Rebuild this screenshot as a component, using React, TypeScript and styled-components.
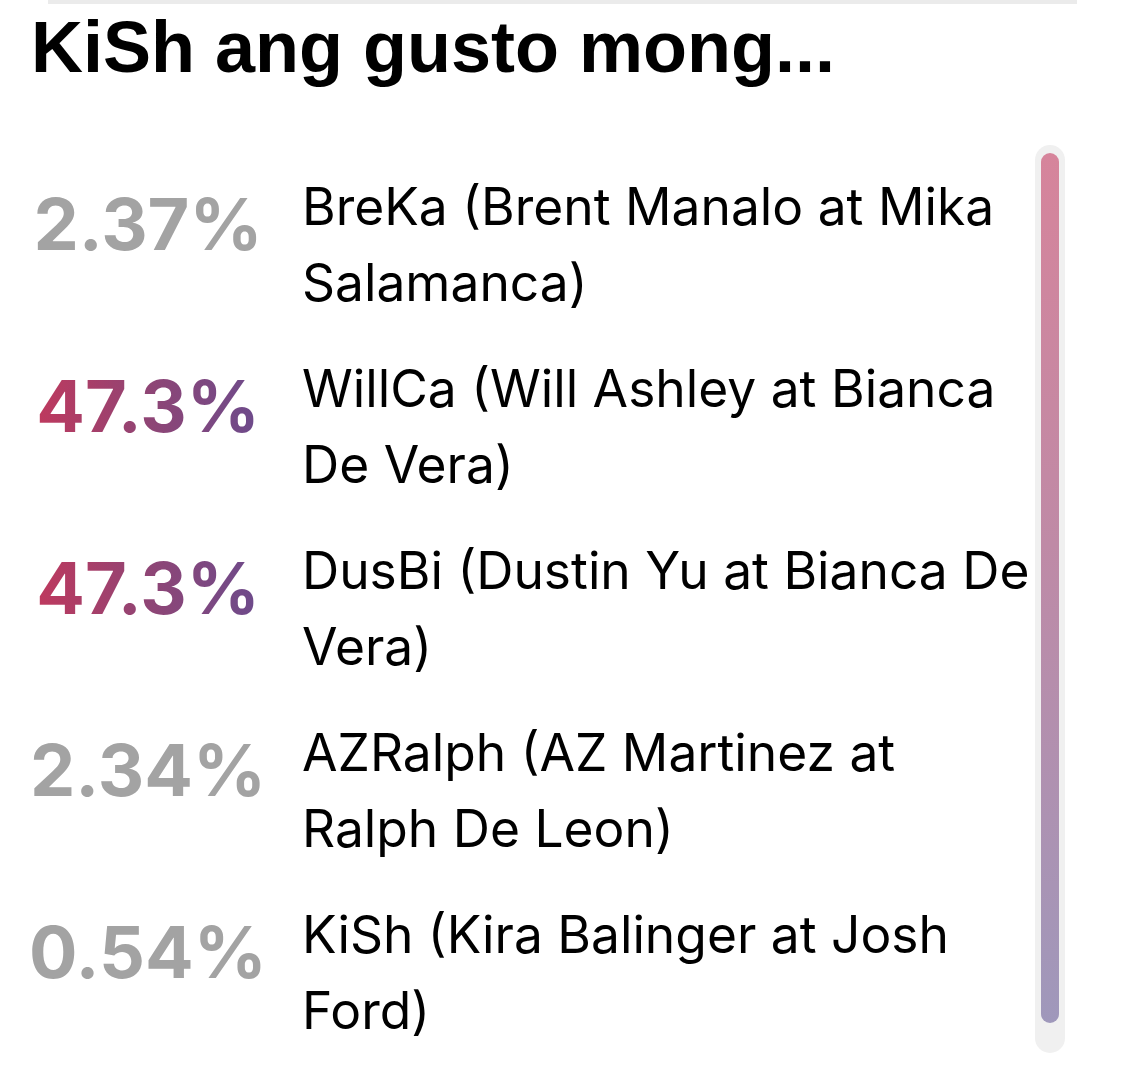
import React from "react";
import styled, { createGlobalStyle } from "styled-components";

const GlobalStyle = createGlobalStyle`
  body {
    margin: 0;
    background: #ffffff;
  }
`;

const Page = styled.div`
  width: 1125px;
  height: 1088px;
  overflow: hidden;
  background: #ffffff;
`;

const TopEdge = styled.div`
  height: 4px;
  margin: 0 48px;
  background: #ebebeb;
`;

const Title = styled.h1`
  margin: 0;
  padding: 3px 0 0 31px;
  font-family: "Liberation Sans", Arial, sans-serif;
  font-weight: 700;
  font-size: 72px;
  line-height: 80px;
  color: #000000;
`;

const Body = styled.div`
  display: flex;
  flex-direction: row;
  margin-top: 58px;
`;

const List = styled.div`
  display: flex;
  flex-direction: column;
  gap: 30px;
  width: 1034px;
  padding-top: 23px;
`;

const Row = styled.div`
  display: flex;
  flex-direction: row;
  align-items: flex-start;
`;

const Percent = styled.span<{ $leading: boolean }>`
  flex: 0 0 240px;
  margin-left: 28px;
  margin-top: 18px;
  text-align: center;
  font-family: Inter, "Noto Sans", sans-serif;
  font-weight: 700;
  font-size: 72px;
  line-height: 76px;
  color: #a3a3a3;
  ${(props) =>
    props.$leading &&
    `
    background: linear-gradient(90deg, #c2385c 0%, #8f4575 50%, #6a4b8d 100%);
    -webkit-background-clip: text;
    background-clip: text;
    color: transparent;
  `}
`;

const Label = styled.span`
  margin-left: 34px;
  flex: 1;
  font-family: Inter, "Noto Sans", sans-serif;
  font-weight: 400;
  font-size: 51.5px;
  line-height: 76px;
  color: #000000;
`;

const Track = styled.div`
  width: 30px;
  height: 908px;
  margin-left: 1px;
  padding: 8px 6px 30px;
  box-sizing: border-box;
  border-radius: 15px;
  background: #f0f0f0;
`;

const Thumb = styled.div`
  height: 100%;
  border-radius: 9px;
  background: linear-gradient(180deg, #d6849b 0%, #bf8aa6 45%, #9f98bb 100%);
`;

type Choice = {
  percent: string;
  name: string;
  leading?: boolean;
};

const choices: Choice[] = [
  { percent: "2.37%", name: "BreKa (Brent Manalo at Mika Salamanca)" },
  { percent: "47.3%", name: "WillCa (Will Ashley at Bianca De Vera)", leading: true },
  { percent: "47.3%", name: "DusBi (Dustin Yu at Bianca De Vera)", leading: true },
  { percent: "2.34%", name: "AZRalph (AZ Martinez at Ralph De Leon)" },
  { percent: "0.54%", name: "KiSh (Kira Balinger at Josh Ford)" },
];

const App = () => (
  <Page>
    <GlobalStyle />
    <TopEdge />
    <Title>KiSh ang gusto mong...</Title>
    <Body>
      <List>
        {choices.map((choice, index) => (
          <Row key={index}>
            <Percent $leading={!!choice.leading}>{choice.percent}</Percent>
            <Label>{choice.name}</Label>
          </Row>
        ))}
      </List>
      <Track>
        <Thumb />
      </Track>
    </Body>
  </Page>
);

export default App;
